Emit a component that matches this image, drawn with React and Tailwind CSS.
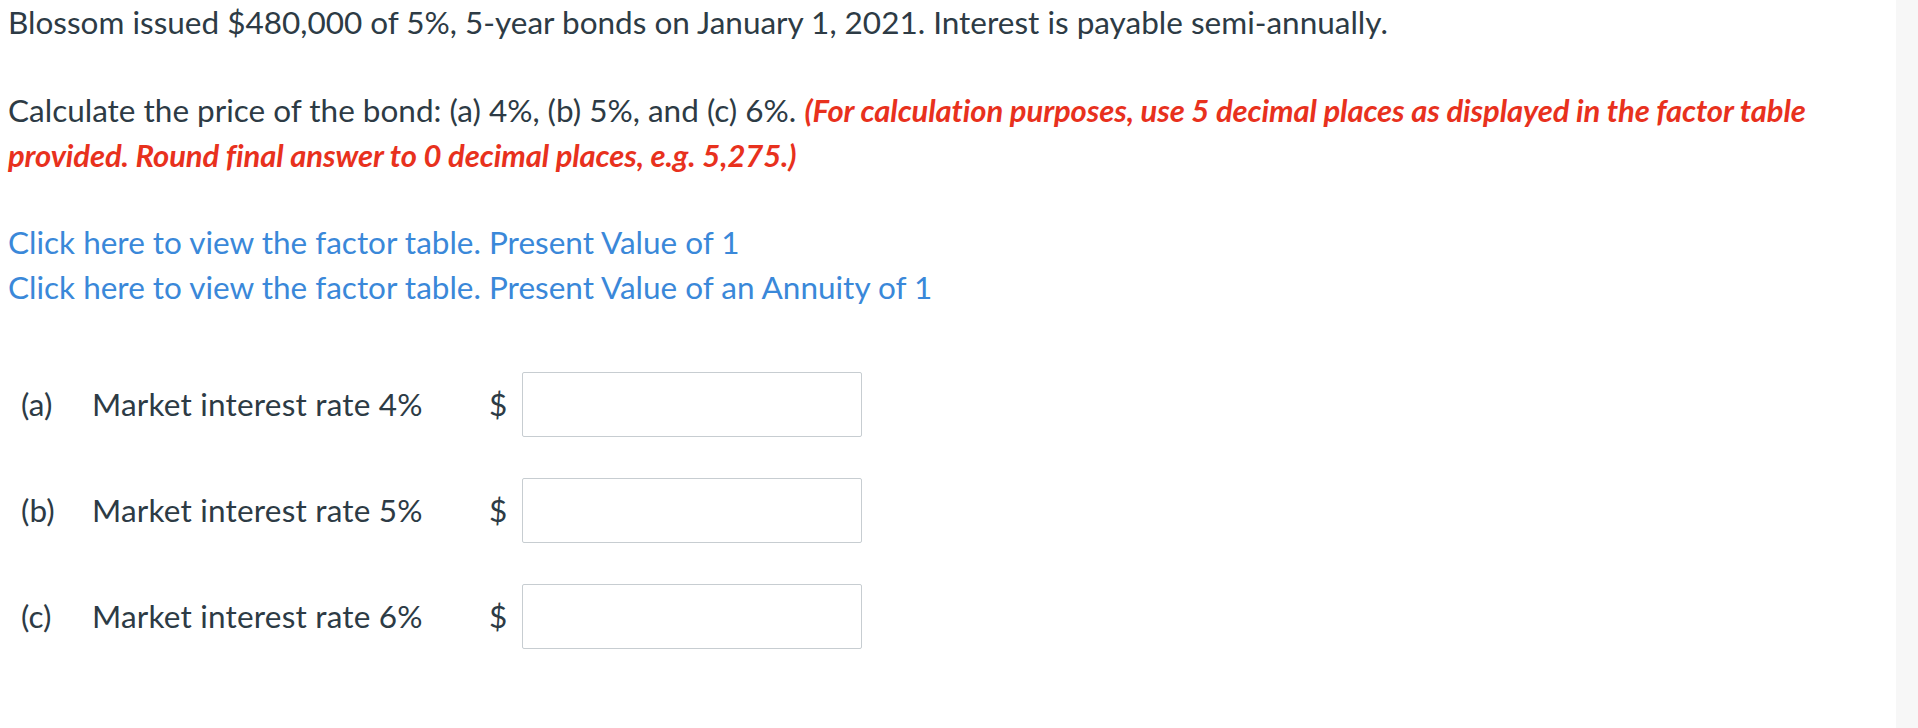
import { useState } from 'react'

const rows = [
  { key: 'a', label: 'Market interest rate 4%' },
  { key: 'b', label: 'Market interest rate 5%' },
  { key: 'c', label: 'Market interest rate 6%' },
]

export default function App() {
  const [values, setValues] = useState({ a: '', b: '', c: '' })

  return (
    <div className="flex min-h-[728px] bg-white font-['Lato','Noto_Sans',sans-serif] text-[31.5px] leading-[45px] text-[#2d3b45]">
      <div className="flex-1 pl-2">
        <p>Blossom issued $480,000 of 5%, 5-year bonds on January 1, 2021. Interest is payable semi-annually.</p>

        <p className="mt-[43px]">
          Calculate the price of the bond: (a) 4%, (b) 5%, and (c) 6%.{' '}
          <span className="font-bold italic text-[31px] tracking-[-0.1px] text-[#e8311d]">
            (For calculation purposes, use 5 decimal places as displayed in the factor table
            <br />
            provided. Round final answer to 0 decimal places, e.g. 5,275.)
          </span>
        </p>

        <div className="mt-[42px] flex flex-col text-[#3a88d9]">
          <a href="#" className="w-fit">Click here to view the factor table. Present Value of 1</a>
          <a href="#" className="w-fit">Click here to view the factor table. Present Value of an Annuity of 1</a>
        </div>

        <div className="mt-[62px] flex flex-col gap-[41px]">
          {rows.map((r) => (
            <div key={r.key} className="flex items-center">
              <span className="ml-[13px] w-[71px]">({r.key})</span>
              <span className="w-[397px] tracking-[0.2px]">{r.label}</span>
              <span className="w-[33px]">$</span>
              <input
                type="text"
                value={values[r.key]}
                onChange={(e) => setValues({ ...values, [r.key]: e.target.value })}
                className="h-[65px] w-[340px] rounded-[2px] border border-[#c7cdd1] bg-white px-3 outline-none"
              />
            </div>
          ))}
        </div>
      </div>
      <div className="w-[22px] bg-[#f7f7f7]" />
    </div>
  )
}
